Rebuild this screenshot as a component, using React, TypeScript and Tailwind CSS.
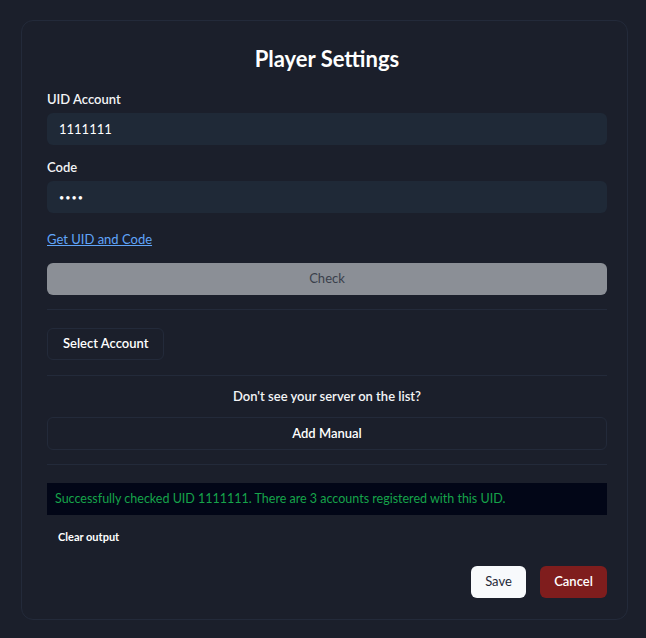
import React, { useState } from "react";

const Divider = ({ className = "" }: { className?: string }) => (
  <div className={`h-px bg-[#232a3a] ${className}`} />
);

const App = () => {
  const [uid, setUid] = useState("1111111");
  const [code, setCode] = useState("1234");
  const [output, setOutput] = useState(
    "Successfully checked UID 1111111. There are 3 accounts registered with this UID."
  );

  return (
    <div
      className="min-h-[638px] bg-[#1b1f2b] pt-5 pl-[21px] pr-[18px] pb-[18px]"
      style={{ fontFamily: "Lato, 'Liberation Sans', sans-serif" }}
    >
      <div className="rounded-xl border border-[#232a3a] pt-6 pl-[25px] pr-5 pb-[21px] text-white">
        <h1 className="text-center text-[22px] font-bold leading-7">Player Settings</h1>

        <label className="mt-4 block text-[13px] font-semibold leading-5 text-gray-100">UID Account</label>
        <input
          className="mt-1 block h-8 w-full rounded-md bg-[#1f2937] px-3 text-[13px] text-white outline-none"
          value={uid}
          onChange={(e) => setUid(e.target.value)}
        />

        <label className="mt-3 block text-[13px] font-semibold leading-5 text-gray-100">Code</label>
        <input
          type="password"
          className="mt-1 block h-8 w-full rounded-md bg-[#1f2937] px-3 text-[9px] tracking-[1px] text-white outline-none"
          value={code}
          onChange={(e) => setCode(e.target.value)}
        />

        <a href="#" className="mt-4 block w-fit text-[13px] leading-5 text-[#60a5fa] underline">
          Get UID and Code
        </a>

        <button className="mt-[14px] block h-8 w-full rounded-md bg-[#8b8f96] text-[13px] text-[#3a3f4b]">
          Check
        </button>

        <Divider className="mt-[14px]" />

        <button className="mt-[18px] block h-8 rounded-md border border-[#232a3a] px-[15px] text-[13px] font-semibold text-white">
          Select Account
        </button>

        <Divider className="mt-[15px]" />

        <p className="mt-[10px] text-center text-[13px] font-semibold leading-5 text-gray-100">
          Don't see your server on the list?
        </p>
        <button className="mt-[11px] block h-[33px] w-full rounded-md border border-[#232a3a] text-[13px] font-semibold text-white">
          Add Manual
        </button>

        <Divider className="mt-[14px]" />

        <div className="mt-[18px] flex h-8 items-center bg-[#020617] px-2 text-[12.5px] text-[#16a34a]">
          {output}
        </div>

        <button
          className="mt-[14px] ml-[11px] block text-[11px] font-bold leading-4 text-white"
          onClick={() => setOutput("")}
        >
          Clear output
        </button>

        <div className="mt-[21px] flex justify-end gap-[14px]">
          <button className="h-8 w-[55px] rounded-md bg-[#f8fafc] text-[13px] text-[#1f2937]">Save</button>
          <button className="h-8 w-[67px] rounded-md bg-[#7f1d1d] text-[13px] font-semibold text-white">
            Cancel
          </button>
        </div>
      </div>
    </div>
  );
};

export default App;
